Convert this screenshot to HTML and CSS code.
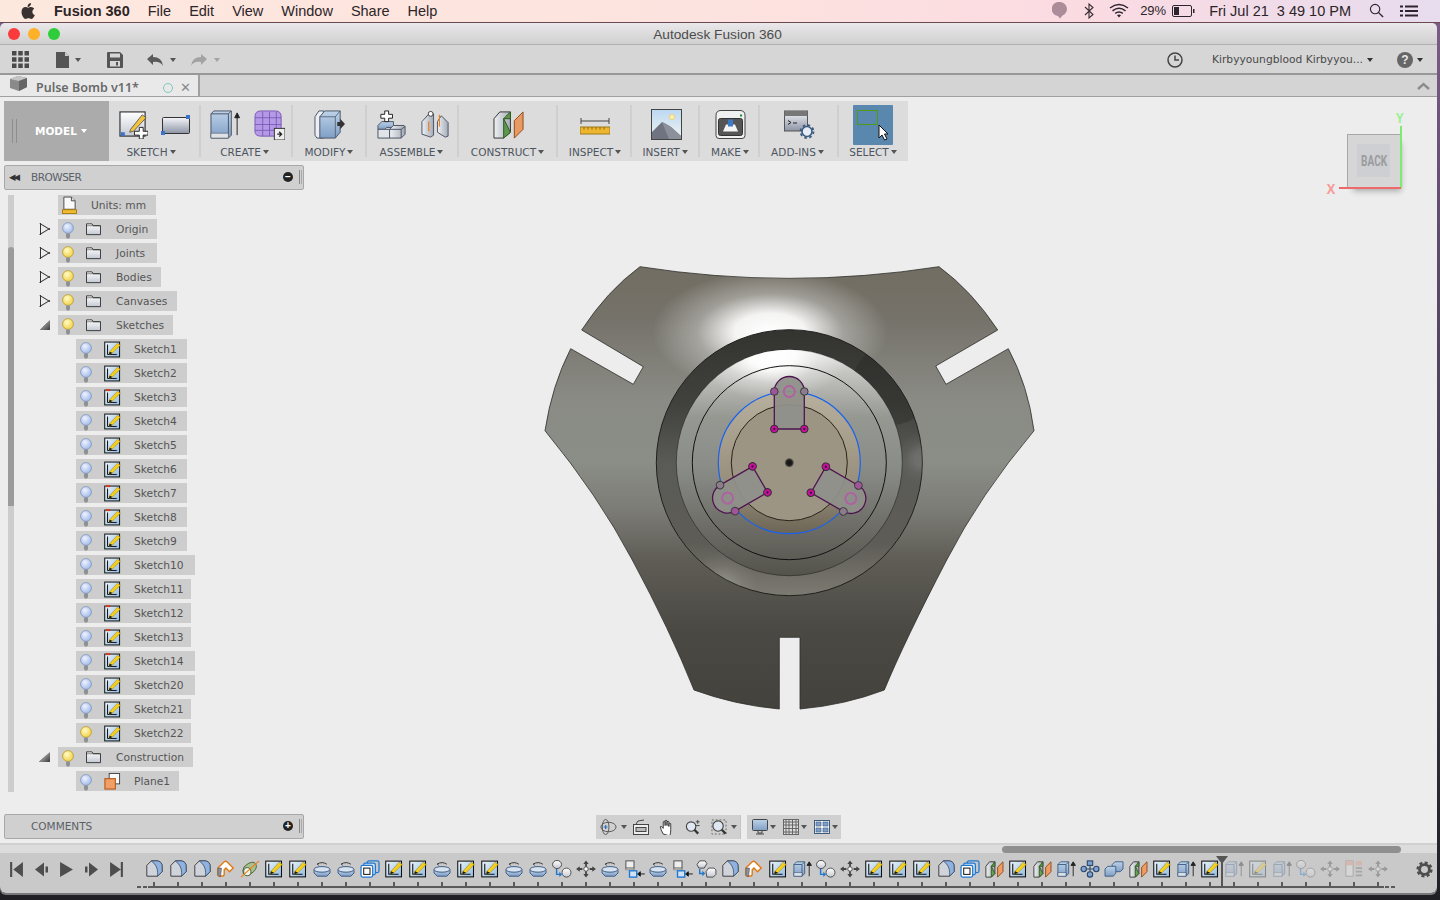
FILE: index.html
```html
<!DOCTYPE html>
<html lang="en">
<head>
<meta charset="utf-8">
<title>Autodesk Fusion 360</title>
<link rel="stylesheet" href="styles.css">
</head>
<body>
<svg class="defs" aria-hidden="true">
  <defs>
    <linearGradient id="gWhite" x1="0" y1="0" x2="0" y2="1"><stop offset="0" stop-color="#fff"/><stop offset="1" stop-color="#c4c9d2"/></linearGradient>
    <linearGradient id="gBlue" x1="0" y1="0" x2="0" y2="1"><stop offset="0" stop-color="#bdd2e8"/><stop offset="1" stop-color="#7f9fc6"/></linearGradient>
    <linearGradient id="gSk" x1="0" y1="0" x2="1" y2="1"><stop offset="0" stop-color="#eef5fb"/><stop offset="1" stop-color="#8fbbe0"/></linearGradient>
    <linearGradient id="gRect" x1="0" y1="0" x2="0" y2="1"><stop offset="0" stop-color="#f4f5f8"/><stop offset="1" stop-color="#8d94a5"/></linearGradient>
    <linearGradient id="gGrey" x1="0" y1="0" x2="1" y2="0"><stop offset="0" stop-color="#eef0f3"/><stop offset="1" stop-color="#a5abb6"/></linearGradient>
    <radialGradient id="gBulbB" cx=".4" cy=".35" r=".7"><stop offset="0" stop-color="#eef3ff"/><stop offset="1" stop-color="#9db8ea"/></radialGradient>
    <radialGradient id="gBulbY" cx=".4" cy=".35" r=".7"><stop offset="0" stop-color="#fffbc8"/><stop offset="1" stop-color="#f2cf3c"/></radialGradient>
    <linearGradient id="gSky" x1="0" y1="0" x2="0" y2="1"><stop offset="0" stop-color="#bcd8f2"/><stop offset="1" stop-color="#f2f4f0"/></linearGradient>

    <symbol id="bulb-b" viewBox="0 0 14 18"><circle cx="7" cy="6" r="5.4" fill="url(#gBulbB)" stroke="#7f93b8" stroke-width=".8"/><path d="M5 11.5h4v3.5l-1 1.5H6l-1-1.5z" fill="#8e9094"/></symbol>
    <symbol id="bulb-y" viewBox="0 0 14 18"><circle cx="7" cy="6" r="5.4" fill="url(#gBulbY)" stroke="#b79a30" stroke-width=".8"/><path d="M5 11.5h4v3.5l-1 1.5H6l-1-1.5z" fill="#8e9094"/></symbol>
    <symbol id="folder" viewBox="0 0 16 14"><path d="M.5 13V1.5h6l1 2h8V13z" fill="url(#gWhite)" stroke="#333"/><path d="M.5 3.5h15" stroke="#333" stroke-width=".6"/></symbol>
    <symbol id="units" viewBox="0 0 16 20"><path d="M2 14V1h8l4 4v9z" fill="#fafafa" stroke="#444"/><path d="M10 1v4h4" fill="#ddd" stroke="#444"/><rect x=".5" y="14.5" width="15" height="4" fill="#f0bb2e" stroke="#a87a10"/></symbol>
    <symbol id="sk" viewBox="0 0 24 24"><rect x="1" y="1.500" width="21" height="21" fill="url(#gSk)" stroke="#111" stroke-width="1.400"/><path d="M5 5v14h13" fill="none" stroke="#111" stroke-width="1.400"/><path d="M8 15 19 3l4 3-11 11-5 2z" fill="#f5cf1e" stroke="#8a6d10" stroke-width=".6"/><path d="M8 15l-1 4 5-2" fill="#111"/></symbol>
    <symbol id="skr" viewBox="0 0 24 24"><rect x="1" y="1.500" width="21" height="21" fill="url(#gSk)" stroke="#111" stroke-width="1.400"/><path d="M5 5v14h13" fill="none" stroke="#111" stroke-width="1.400"/><path d="M8 15 19 3l4 3-11 11-5 2z" fill="#f5cf1e" stroke="#8a6d10" stroke-width=".6"/><path d="M8 15l-1 4 5-2" fill="#111"/><path d="M3 0h6v3H3z" fill="#c9402a"/></symbol>
    <symbol id="plane" viewBox="0 0 18 18"><rect x="5.500" y=".5" width="11" height="11" fill="#fafafa" stroke="#444"/><rect x="1" y="6" width="11" height="11" fill="#f0a066" stroke="#b85a18" stroke-width="1.200"/></symbol>

    <symbol id="t-chamfer" viewBox="0 0 24 20"><path d="M4 18V6l5-5h7q5 1 5 6v6l-5 5z" fill="#d0d4da" stroke="#333"/><path d="M9 1h7q5 1 5 6v6l-5 5v-4q0-8-7-13z" fill="#8fb2de" stroke="#2f4666" stroke-width=".8"/></symbol>
    <symbol id="t-fillet" viewBox="0 0 24 20"><path d="M6 18q-3 0-3-2V9l7-7q2-1 3 0l7 7-4 4-4-4-2 2v5q0 2-4 2z" fill="#fff" stroke="#e07a14" stroke-width="1.600"/><path d="M3 9v8q1 2 3 1l1-9z" fill="#8c929e" stroke="#444" stroke-width=".6"/></symbol>
    <symbol id="t-cyl" viewBox="0 0 24 20"><path d="M4 12q0-5 6-8 6-3 8 0 3 4-2 9-5 5-9 4-3-1-3-5z" fill="#a9c28d" stroke="#3e5c2f"/><ellipse cx="9" cy="13" rx="4" ry="4.500" fill="#eef2e8" stroke="#3e5c2f"/><path d="M2 19 22 1" stroke="#ef7d1a" stroke-width="1.200"/></symbol>
    <symbol id="t-rev" viewBox="-3 -1 30 22"><path d="M6 4q6-4 12 0" fill="none" stroke="#333" stroke-width="1.200"/><path d="M6 4l2-1M6 4l2 1.500" fill="none" stroke="#333"/><path d="M2 11v4l4 4h12l4-4v-4z" fill="url(#gBlue)" stroke="#3c5a80" stroke-width="1.200"/><ellipse cx="12" cy="10.500" rx="10" ry="3.500" fill="#d7e3f0" stroke="#3c5a80" stroke-width="1.200"/></symbol>
    <symbol id="t-offset" viewBox="0 0 24 20"><rect x="9" y="1" width="13" height="13" rx="2" fill="none" stroke="#1e78d2" stroke-width="1.400"/><rect x="5" y="3.500" width="13" height="13" rx="2" fill="#cfe0f2" stroke="#1e78d2" stroke-width="1.400"/><rect x="2" y="6" width="13" height="13" rx="2" fill="#fff" stroke="#1e78d2" stroke-width="1.400"/><rect x="5" y="9" width="7" height="7" fill="#fff" stroke="#222" stroke-width="1.200"/></symbol>
    <symbol id="t-combine" viewBox="0 0 24 20"><ellipse cx="6.500" cy="5" rx="5" ry="4.500" fill="url(#gWhite)" stroke="#444"/><circle cx="17" cy="14" r="5" fill="url(#gWhite)" stroke="#444"/><path d="M6 10v6h5" fill="none" stroke="#1e78d2" stroke-width="1.600"/><path d="M9 13l3 3-3 3" fill="#1e78d2"/></symbol>
    <symbol id="t-move" viewBox="0 0 24 20"><path d="M12 .5l3 4h-2v3h-2v-3H9zM12 19.500l3-4h-2v-3h-2v3H9zM1 10l4-3v2h3v2H5v2zM23 10l-4-3v2h-3v2h3v2z" fill="#444"/><circle cx="12" cy="10" r="2.500" fill="#fff" stroke="#444"/></symbol>
    <symbol id="t-split" viewBox="0 0 24 20"><rect x="3" y="1" width="9" height="8" fill="#eee" stroke="#444"/><rect x="3" y="9" width="9" height="2" fill="#ddd" stroke="#444" stroke-width=".5"/><rect x="7" y="12" width="8" height="7" fill="#cfe2f5" stroke="#1e78d2" stroke-width="1.500"/><path d="M24 15.500h-5M19 13l-3 2.500 3 2.500z" fill="#111" stroke="#111"/></symbol>
    <symbol id="t-combo" viewBox="0 0 24 20"><path d="M2 5l3-4h6l2 3-3 5H4z" fill="url(#gWhite)" stroke="#444"/><path d="M12 13l3-4h6l2 2v5l-3 3h-7z" fill="url(#gWhite)" stroke="#444"/><path d="M5 10v5h5" fill="none" stroke="#1e78d2" stroke-width="1.600"/><path d="M8 12l3 3-3 3" fill="#1e78d2"/></symbol>
    <symbol id="t-ext" viewBox="0 0 24 20"><path d="M3 5l3-3h9v13l-3 3H3z" fill="url(#gBlue)" stroke="#3c5a80"/><path d="M3 5h9l3-3M12 5v13" fill="none" stroke="#3c5a80"/><path d="M3 14h9v4H3z" fill="#dfe4ea" stroke="#3c5a80" stroke-width=".7"/><path d="M20 18V3M17.500 6 20 2l2.500 4z" fill="#222" stroke="#222"/></symbol>
    <symbol id="t-planes" viewBox="0 0 24 20"><path d="M3 7l4-5h6v13l-4 4H3z" fill="url(#gGrey)" stroke="#333"/><path d="M9 7h4V2L9 7v12l4-4z" fill="#6aa055" stroke="#2c5a1e"/><path d="M16 8l6-6v11l-6 6z" fill="#ef9b62" stroke="#8c4a18"/></symbol>
    <symbol id="t-pattern" viewBox="0 0 24 20"><rect x="9" y="1" width="6" height="5" fill="#7ea3d0" stroke="#2a466e" stroke-width="1.200"/><rect x="2" y="7" width="6" height="6" rx="3" fill="#7ea3d0" stroke="#2a466e" stroke-width="1.200"/><rect x="16" y="7" width="6" height="6" rx="3" fill="#7ea3d0" stroke="#2a466e" stroke-width="1.200"/><rect x="9" y="13" width="6" height="6" rx="3" fill="#7ea3d0" stroke="#2a466e" stroke-width="1.200"/><path d="M8 10h8M12 6v7" stroke="#2a466e" stroke-width="1.200"/></symbol>
    <symbol id="t-copy" viewBox="0 0 24 20"><path d="M10 5l3-3h9v8l-3 3H10z" fill="url(#gBlue)" stroke="#3c5a80"/><path d="M2 10l3-3h9v8l-3 3H2z" fill="url(#gBlue)" stroke="#3c5a80"/></symbol>
    <symbol id="t-table" viewBox="0 0 24 20"><rect x="3" y="1" width="8" height="17" fill="#eee" stroke="#666"/><rect x="3" y="1" width="8" height="5" fill="#e59a86"/><rect x="14" y="1" width="7" height="5" fill="#e59a86"/><path d="M14 9h7M14 13h7M14 17h7" stroke="#666" stroke-width="2"/></symbol>
  </defs>
</svg>

<header class="menubar">
  <div class="menu-left">
    <svg class="apple" viewBox="0 0 14 16"><path d="M10 0q.2 2-1.100 3.100Q7.800 4.200 6.500 4 6.500 2 7.600 1 8.800 0 10 0zM7 4.700c1 0 1.800-.7 3-.7 1.300 0 2.500.7 3.200 1.800-2.700 1.500-2.300 5.300.6 6.400-.7 1.800-2.200 3.800-3.500 3.800-1.100 0-1.500-.7-2.800-.7s-1.800.7-2.800.7C3 16 .5 12.500.5 9 .5 6 2.400 4.100 4.300 4.100c1.200 0 2 .6 2.700.6z" fill="#3a3230"/></svg>
    <strong class="app-name">Fusion 360</strong>
    <span>File</span><span>Edit</span><span>View</span><span>Window</span><span>Share</span><span>Help</span>
  </div>
  <div class="menu-right">
    <svg class="st-blob" viewBox="0 0 15 17"><path d="M7.500 0a7 7 0 0 1 3 13.500L8 16.500 6 14A7 7 0 0 1 7.500 0z" fill="#ab8c98"/></svg>
    <svg class="st-bt" viewBox="0 0 10 16"><path d="M1 4l8 7.500L5 15V1l4 3.500L1 12" fill="none" stroke="#3a2c34" stroke-width="1.100"/></svg>
    <svg class="st-wifi" viewBox="0 0 20 15"><path d="M1 5q9-7 18 0M3.500 7.800q6.500-5 13 0M6.200 10.400q3.800-3 7.600 0" fill="none" stroke="#2e2430" stroke-width="1.500"/><path d="M10 14.500l-2-2.300q2-1.300 4 0z" fill="#2e2430"/></svg>
    <span class="st-pct">29%</span>
    <svg class="st-bat" viewBox="0 0 23 12"><rect x=".5" y=".5" width="19" height="11" rx="1.500" fill="none" stroke="#2e2430"/><rect x="2" y="2" width="5" height="8" fill="#2e2430"/><rect x="21" y="4" width="1.500" height="4" fill="#2e2430"/></svg>
    <span class="st-date">Fri Jul 21&nbsp; 3 49 10 PM</span>
    <svg class="st-search" viewBox="0 0 16 16"><circle cx="6.500" cy="6.500" r="5" fill="none" stroke="#2e2430" stroke-width="1.200"/><path d="M10 10l5 5" stroke="#2e2430" stroke-width="1.500"/></svg>
    <svg class="st-list" viewBox="0 0 18 12"><path d="M5 1.500h13M5 6h13M5 10.500h13M0 1.500h3M0 6h3M0 10.500h3" stroke="#2e2430" stroke-width="1.800"/></svg>
  </div>
</header>

<div class="window">
  <div class="titlebar">
    <div class="lights"><i class="light red"></i><i class="light amber"></i><i class="light green"></i></div>
    <div class="title">Autodesk Fusion 360</div>
  </div>

  <div class="toolbar">
    <div class="tool-left">
      <svg class="ic-apps" viewBox="0 0 17 17"><path d="M0 0h4.500v4.500H0zM6.250 0h4.500v4.500h-4.500zM12.500 0H17v4.500h-4.500zM0 6.250h4.500v4.500H0zM6.250 6.250h4.500v4.500h-4.500zM12.500 6.250H17v4.500h-4.500zM0 12.500h4.500V17H0zM6.250 12.500h4.500V17h-4.500zM12.500 12.500H17V17h-4.500z" fill="#4a4a4a"/></svg>
      <span class="tool-pair tp-file"><svg class="ic-file" viewBox="0 0 14 16"><path d="M0 0h9l4 4v12H0z" fill="#555"/><path d="M9 0v4h4" fill="#ccc"/></svg><i class="caret"></i></span>
      <svg class="ic-save" viewBox="0 0 16 16"><path d="M0 1q0-1 1-1h12l3 3v12q0 1-1 1H1q-1 0-1-1z" fill="#555"/><rect x="3" y="1.500" width="10" height="4" fill="#d6d6d6"/><rect x="3" y="9" width="10" height="5.500" fill="#d6d6d6"/><rect x="9" y="10" width="2" height="3.500" fill="#555"/></svg>
      <span class="tool-pair tp-undo"><svg class="ic-arrow" viewBox="0 0 16 12"><path d="M0 5l6-5v3q9 0 10 9-3-5-10-4v3z" fill="#5a5a5a"/></svg><i class="caret"></i></span>
      <span class="tool-pair tp-redo"><svg class="ic-arrow" viewBox="0 0 16 12"><path d="M16 5l-6-5v3Q1 3 0 12q3-5 10-4v3z" fill="#a3a3a3"/></svg><i class="caret dim"></i></span>
    </div>
    <div class="tool-right">
      <svg class="ic-clock" viewBox="0 0 16 16"><circle cx="8" cy="8" r="7" fill="none" stroke="#444" stroke-width="1.500"/><path d="M8 3.500V8h4" fill="none" stroke="#444" stroke-width="1.500"/></svg>
      <span class="user">Kirbyyoungblood Kirbyyou...</span><i class="caret dark"></i>
      <span class="tool-pair tp-help"><span class="help">?</span><i class="caret dark"></i></span>
    </div>
  </div>

  <div class="tabbar">
    <div class="tab">
      <svg class="ic-tabcube" viewBox="0 0 17 15"><path d="M0 3l8-3 9 2v9l-8 4-9-3z" fill="#8a8a8a"/><path d="M0 3l9 2 8-3-9-2z" fill="#c4c4c4"/><path d="M9 5v10l8-4V2z" fill="#666"/></svg>
      <span class="tab-name">Pulse Bomb v11*</span>
      <i class="tab-dot"></i>
      <span class="tab-x">✕</span>
    </div>
    <svg class="ic-collapse" viewBox="0 0 13 8"><path d="M1 7l5.500-5L12 7" fill="none" stroke="#8c8c8c" stroke-width="2.400"/></svg>
  </div>

  <main class="viewport">
    <svg class="model" viewBox="530 250 520 470">
      <defs>
        <linearGradient id="mBody" gradientUnits="userSpaceOnUse" x1="0" y1="266" x2="0" y2="709"><stop offset="0" stop-color="#716d62"/><stop offset=".12" stop-color="#75726a"/><stop offset=".3" stop-color="#8a8b85"/><stop offset=".44" stop-color="#8b8d87"/><stop offset=".55" stop-color="#7c7c76"/><stop offset=".66" stop-color="#5f5d56"/><stop offset=".82" stop-color="#4b4943"/><stop offset="1" stop-color="#44423c"/></linearGradient>
        <radialGradient id="mGlow"><stop offset="0" stop-color="#fff"/><stop offset=".3" stop-color="#fff" stop-opacity=".92"/><stop offset=".62" stop-color="#fff" stop-opacity=".32"/><stop offset="1" stop-color="#fff" stop-opacity="0"/></radialGradient>
        <linearGradient id="mRing" gradientUnits="userSpaceOnUse" x1="0" y1="330" x2="0" y2="596"><stop offset="0" stop-color="#33332f"/><stop offset=".28" stop-color="#41413d"/><stop offset=".5" stop-color="#5a5b57"/><stop offset=".8" stop-color="#5e5c56"/><stop offset="1" stop-color="#7d7a72"/></linearGradient>
        <linearGradient id="mDisc" gradientUnits="userSpaceOnUse" x1="0" y1="350" x2="0" y2="576"><stop offset="0" stop-color="#e8e8e6"/><stop offset=".1" stop-color="#c4c4c1"/><stop offset=".3" stop-color="#959791"/><stop offset=".52" stop-color="#8a8c88"/><stop offset=".74" stop-color="#72726c"/><stop offset="1" stop-color="#54524b"/></linearGradient>
        <linearGradient id="mTan" gradientUnits="userSpaceOnUse" x1="0" y1="392" x2="0" y2="534"><stop offset="0" stop-color="#b8b09e"/><stop offset=".7" stop-color="#948b79"/><stop offset="1" stop-color="#6c6454"/></linearGradient>
        <radialGradient id="mDot"><stop offset="0" stop-color="#111"/><stop offset=".6" stop-color="#222"/><stop offset="1" stop-color="#222" stop-opacity="0"/></radialGradient>
        <clipPath id="mClip"><path d="M640 266.700Q789 290 939 266.700Q972 291 997.700 330L935.700 366L946 384.300L1008.300 348.700Q1028 385 1034 430.700Q980 495 946.700 560Q905 640 884.300 690Q845 705 800 709V637.300H779.300V709Q735 705 694 690Q670 630 632.300 560Q598 495 545 430.700Q552 385 570.700 348.700L633.300 384.300L643.300 366.700L581.700 330Q607 291 640 266.700z"/></clipPath>
        <clipPath id="mRingClip"><circle cx="789.300" cy="462.700" r="133"/></clipPath>
        <clipPath id="mDiscClip"><circle cx="789.300" cy="462.700" r="113"/></clipPath>
        <g id="arm">
          <path d="M774.500 391.500A15 15 0 0 1 804.500 391.500V429H774.500z" fill="#8f918a" fill-opacity=".94" stroke="#4e1450" stroke-width="1.300"/>
          <circle cx="789.500" cy="391.500" r="5.500" fill="none" stroke="#b05fa2" stroke-width="1.800"/>
          <circle cx="774.500" cy="391.500" r="3.800" fill="#a0549a" stroke="#3a3a3a"/>
          <circle cx="804.500" cy="391.500" r="3.800" fill="#8d7b8e" stroke="#3a3a3a"/>
          <circle cx="774.500" cy="429" r="3.800" fill="#c4109a" stroke="#2e2e2e"/><circle cx="774.500" cy="429" r="1.100" fill="#301030"/>
          <circle cx="804.500" cy="429" r="3.800" fill="#c4109a" stroke="#2e2e2e"/><circle cx="804.500" cy="429" r="1.100" fill="#301030"/>
        </g>
      </defs>
      <path d="M640 266.700Q789 290 939 266.700Q972 291 997.700 330L935.700 366L946 384.300L1008.300 348.700Q1028 385 1034 430.700Q980 495 946.700 560Q905 640 884.300 690Q845 705 800 709V637.300H779.300V709Q735 705 694 690Q670 630 632.300 560Q598 495 545 430.700Q552 385 570.700 348.700L633.300 384.300L643.300 366.700L581.700 330Q607 291 640 266.700z" fill="url(#mBody)" stroke="#2c2c2a" stroke-width=".8"/>
      <g clip-path="url(#mClip)"><ellipse cx="770" cy="332" rx="118" ry="62" fill="url(#mGlow)"/></g>
      <circle cx="789.300" cy="462.700" r="133" fill="url(#mRing)" stroke="#1f1f1d"/>
      <g clip-path="url(#mRingClip)">
        <circle cx="922" cy="458" r="26" fill="url(#mGlow)" opacity=".14"/>
        <circle cx="722" cy="588" r="36" fill="url(#mGlow)" opacity=".18"/>
        <circle cx="892" cy="385" r="40" fill="#222" opacity=".3"/>
      </g>
      <circle cx="789.300" cy="462.700" r="113" fill="url(#mDisc)" stroke="#222" stroke-width=".6"/>
      <g clip-path="url(#mDiscClip)"><ellipse cx="772" cy="356" rx="76" ry="44" fill="url(#mGlow)"/></g>
      <circle cx="789.300" cy="462.700" r="97" fill="none" stroke="#111" stroke-width="1"/>
      <circle cx="789.300" cy="462.700" r="71" fill="url(#mTan)" stroke="#1a62ee" stroke-width="1.200"/>
      <circle cx="789.300" cy="462.700" r="58" fill="#9c9584" stroke="#2a2218" stroke-width="1"/>
      <circle cx="789.300" cy="462.700" r="5" fill="url(#mDot)"/>
      <use href="#arm" transform="translate(-.2 0)"/>
      <use href="#arm" transform="rotate(120 789.300 462.700)"/>
      <use href="#arm" transform="rotate(240 789.300 462.700)"/>
    </svg>

    <div class="cube">
      <span class="ax-y">Y</span>
      <span class="ax-x">X</span>
      <i class="axis-y"></i>
      <i class="axis-x"></i>
      <div class="cube-face"><span class="cube-label">BACK</span></div>
    </div>

    <nav class="ribbon">
      <div class="rb-model"><i class="grip"></i><span>MODEL</span><i class="caret white"></i></div>
      <div class="rb-group g-sketch">
        <div class="rb-icons">
          <svg class="ri-28" viewBox="0 0 30 30"><rect x="1" y="2" width="26" height="25" fill="url(#gWhite)" stroke="#333" stroke-width="1.200"/><rect x="2" y="23" width="4" height="4" fill="#3e72c8"/><path d="M12 20 24 5l4 3-13 14-4 1z" fill="#f4c33c" stroke="#555" stroke-width=".9"/><path d="M16 22h5v-4h4v4h5v4h-5v4h-4v-4h-5z" fill="#fff" stroke="#222"/></svg>
          <svg class="ri-rect" viewBox="0 0 30 20"><rect x="1.500" y="2.500" width="27" height="16" rx="1" fill="url(#gRect)" stroke="#333"/><rect x="25" y="0" width="4" height="4" fill="#3e72c8"/><rect x="0" y="16" width="4" height="4" fill="#3e72c8"/></svg>
        </div>
        <span class="rb-label">SKETCH<i class="caret"></i></span>
      </div>
      <div class="rb-group g-create">
        <div class="rb-icons">
          <svg class="ri-32" viewBox="0 0 32 32"><path d="M1 5l3-3h18v25l-3 3H1z" fill="url(#gBlue)" stroke="#4a5566"/><path d="M19 5v25M1 5h18l3-3" fill="none" stroke="#4a5566"/><path d="M1 25h18v5H1z" fill="#dfe3e8" stroke="#4a5566" stroke-width=".6"/><path d="M28 27V6M25.500 9 28 4l2.500 5z" fill="#222" stroke="#222"/></svg>
          <svg class="ri-32" viewBox="0 0 32 32"><path d="M1 8q0-6 6-6h15q6 0 6 6v15q0 5-6 5H7q-6 0-6-5z" fill="#b49ae6" stroke="#7a58b5"/><path d="M1 9h27M1 16h27M1 22h24M9 3v25M16 3v25M23 3v22" stroke="#7a58b5" stroke-width=".9" fill="none"/><rect x="21" y="20" width="11" height="12" fill="#eee" stroke="#333"/><path d="M24 26h4M26 23.500l2.500 2.500-2.500 2.500" fill="none" stroke="#222" stroke-width="1.300"/></svg>
        </div>
        <span class="rb-label">CREATE<i class="caret"></i></span>
      </div>
      <div class="rb-group g-modify">
        <div class="rb-icons">
          <svg class="ri-32" viewBox="0 0 32 32"><path d="M1 8l4-6h5v28H3l-2-3z" fill="#eceef2" stroke="#4a5566"/><path d="M6 30V8l5-6h16v22l-5 6z" fill="url(#gBlue)" stroke="#4a5566"/><path d="M6 8h16l5-6M22 8v22" fill="none" stroke="#4a5566" stroke-width=".8"/><path d="M24 13.500h3V10l5 5.500-5 5.500v-3.500h-3z" fill="#333"/></svg>
        </div>
        <span class="rb-label">MODIFY<i class="caret"></i></span>
      </div>
      <div class="rb-group g-assemble">
        <div class="rb-icons">
          <svg class="ri-32" viewBox="0 0 32 30"><path d="M2 16l4-4h12v6h-7l-1 1v1H2z" fill="url(#gBlue)" stroke="#4a5566"/><path d="M2 20h12v9H2z" fill="#e0e3e8" stroke="#4a5566"/><path d="M14 20l4-4h11l1 1v8l-4 4H14z" fill="url(#gGrey)" stroke="#4a5566"/><path d="M14 20h12v9M26 20l4-3" fill="none" stroke="#4a5566"/><path d="M5 4.500h4V1h4v3.500h4v4h-4V12H9V8.500H5z" fill="#fff" stroke="#222"/></svg>
          <svg class="ri-32" viewBox="0 0 32 30"><path d="M2 12l9-10 3 2v22l-3 2-9-3z" fill="url(#gGrey)" stroke="#4a5566"/><path d="M18 12l4-6 7 7v14l-3 1-8-5z" fill="url(#gGrey)" stroke="#4a5566"/><circle cx="11" cy="4" r="2.500" fill="#fff" stroke="#444"/><path d="M9 12v10M20 5v12" stroke="#ec7a1a" stroke-width="1.200"/></svg>
        </div>
        <span class="rb-label">ASSEMBLE<i class="caret"></i></span>
      </div>
      <div class="rb-group g-construct">
        <div class="rb-icons">
          <svg class="ri-32" viewBox="0 0 32 30"><path d="M1 9l6-7h11v21l-7 6H1z" fill="url(#gGrey)" stroke="#333"/><path d="M11 9h7V2l-7 7v20l7-6z" fill="#5e9650" stroke="#2c5a1e"/><path d="M22 11l9-9v18l-9 9z" fill="#e99a64" stroke="#8c4a18"/></svg>
        </div>
        <span class="rb-label">CONSTRUCT<i class="caret"></i></span>
      </div>
      <div class="rb-group g-inspect">
        <div class="rb-icons">
          <svg class="ri-ruler" viewBox="0 0 30 18"><path d="M1 1v6M29 1v6M1 4h28" stroke="#444" fill="none"/><rect x="0" y="10" width="30" height="7" fill="#eeb52f" stroke="#a07a18"/><path d="M4 10v2.500M8 10v2.500M12 10v2.500M16 10v2.500M20 10v2.500M24 10v2.500" stroke="#8d6a12"/></svg>
        </div>
        <span class="rb-label">INSPECT<i class="caret"></i></span>
      </div>
      <div class="rb-group g-insert">
        <div class="rb-icons">
          <svg class="ri-32" viewBox="0 0 31 31"><rect x=".5" y=".5" width="30" height="30" fill="url(#gSky)" stroke="#444"/><circle cx="21" cy="8" r="2.500" fill="#fff3b0" stroke="#f0d070"/><path d="M1 30V23L11 13l4 2 5 3 10 9v3z" fill="#6f7480"/><path d="M11 13l4 2 5 3 10 9v3H18z" fill="#8b909a"/></svg>
        </div>
        <span class="rb-label">INSERT<i class="caret"></i></span>
      </div>
      <div class="rb-group g-make">
        <div class="rb-icons">
          <svg class="ri-32" viewBox="0 0 31 30"><path d="M1 6q0-5 5-5h19q5 0 5 5v20q0 3-3 3H4q-3 0-3-3z" fill="#f0f0f0" stroke="#444"/><rect x="3.500" y="9" width="24" height="17" rx="2" fill="#555" stroke="#333"/><path d="M8 22l3-7h9l3 7z" fill="#f4f4f4"/><rect x="13" y="10" width="5" height="7" fill="#3e78c8"/><rect x="25" y="5" width="2" height="2" fill="#178a35"/></svg>
        </div>
        <span class="rb-label">MAKE<i class="caret"></i></span>
      </div>
      <div class="rb-group g-addins">
        <div class="rb-icons">
          <svg class="ri-32" viewBox="0 0 31 30"><rect x=".5" y="1.500" width="23" height="20" fill="url(#gRect)" stroke="#555"/><rect x=".5" y="1.500" width="23" height="5" fill="#777"/><path d="M4 11l3 2-3 2M9 13.500h4" fill="none" stroke="#222"/><circle cx="23" cy="22" r="5" fill="#e6ecf6" stroke="#3c5a80" stroke-width="1.600"/><circle cx="23" cy="22" r="6.500" fill="none" stroke="#3c5a80" stroke-width="1.800" stroke-dasharray="2.500 2.600"/></svg>
        </div>
        <span class="rb-label">ADD-INS<i class="caret"></i></span>
      </div>
      <div class="rb-group g-select">
        <div class="rb-icons">
          <div class="sel-box"><i class="sel-rect"></i><svg class="sel-cursor" viewBox="0 0 11 17"><path d="M1 1v13l3-3 2.500 5 2.500-1-2.500-5H10z" fill="#fff" stroke="#111"/></svg></div>
        </div>
        <span class="rb-label">SELECT<i class="caret"></i></span>
      </div>
    </nav>

    <section class="panel-head browser">
      <span class="back-tri">◀◀</span>
      <span class="panel-title">BROWSER</span>
      <span class="panel-btn">−</span>
      <i class="panel-grip"></i>
    </section>

    <section class="tree">
      <div class="tree-scroll"><i class="thumb"></i></div>
      <ul class="rows">
        <li class="row"><span class="pill pill-units"><svg class="i-units"><use href="#units"/></svg><span>Units: mm</span></span></li>
        <li class="row"><i class="arr"></i><span class="pill w-99"><svg class="i-bulb"><use href="#bulb-b"/></svg><svg class="i-folder"><use href="#folder"/></svg><span>Origin</span></span></li>
        <li class="row"><i class="arr"></i><span class="pill w-99"><svg class="i-bulb"><use href="#bulb-y"/></svg><svg class="i-folder"><use href="#folder"/></svg><span>Joints</span></span></li>
        <li class="row"><i class="arr"></i><span class="pill w-103"><svg class="i-bulb"><use href="#bulb-y"/></svg><svg class="i-folder"><use href="#folder"/></svg><span>Bodies</span></span></li>
        <li class="row"><i class="arr"></i><span class="pill w-119"><svg class="i-bulb"><use href="#bulb-y"/></svg><svg class="i-folder"><use href="#folder"/></svg><span>Canvases</span></span></li>
        <li class="row"><i class="arr open"></i><span class="pill w-115"><svg class="i-bulb"><use href="#bulb-y"/></svg><svg class="i-folder"><use href="#folder"/></svg><span>Sketches</span></span></li>
        <li class="row sub"><span class="pill w-111"><svg class="i-bulb"><use href="#bulb-b"/></svg><svg class="i-sk"><use href="#sk"/></svg><span>Sketch1</span></span></li>
        <li class="row sub"><span class="pill w-111"><svg class="i-bulb"><use href="#bulb-b"/></svg><svg class="i-sk"><use href="#sk"/></svg><span>Sketch2</span></span></li>
        <li class="row sub"><span class="pill w-111"><svg class="i-bulb"><use href="#bulb-b"/></svg><svg class="i-sk"><use href="#skr"/></svg><span>Sketch3</span></span></li>
        <li class="row sub"><span class="pill w-111"><svg class="i-bulb"><use href="#bulb-b"/></svg><svg class="i-sk"><use href="#sk"/></svg><span>Sketch4</span></span></li>
        <li class="row sub"><span class="pill w-111"><svg class="i-bulb"><use href="#bulb-b"/></svg><svg class="i-sk"><use href="#sk"/></svg><span>Sketch5</span></span></li>
        <li class="row sub"><span class="pill w-111"><svg class="i-bulb"><use href="#bulb-b"/></svg><svg class="i-sk"><use href="#sk"/></svg><span>Sketch6</span></span></li>
        <li class="row sub"><span class="pill w-111"><svg class="i-bulb"><use href="#bulb-b"/></svg><svg class="i-sk"><use href="#skr"/></svg><span>Sketch7</span></span></li>
        <li class="row sub"><span class="pill w-111"><svg class="i-bulb"><use href="#bulb-b"/></svg><svg class="i-sk"><use href="#skr"/></svg><span>Sketch8</span></span></li>
        <li class="row sub"><span class="pill w-111"><svg class="i-bulb"><use href="#bulb-b"/></svg><svg class="i-sk"><use href="#sk"/></svg><span>Sketch9</span></span></li>
        <li class="row sub"><span class="pill w-119"><svg class="i-bulb"><use href="#bulb-b"/></svg><svg class="i-sk"><use href="#sk"/></svg><span>Sketch10</span></span></li>
        <li class="row sub"><span class="pill w-115"><svg class="i-bulb"><use href="#bulb-b"/></svg><svg class="i-sk"><use href="#sk"/></svg><span>Sketch11</span></span></li>
        <li class="row sub"><span class="pill w-115"><svg class="i-bulb"><use href="#bulb-b"/></svg><svg class="i-sk"><use href="#skr"/></svg><span>Sketch12</span></span></li>
        <li class="row sub"><span class="pill w-115"><svg class="i-bulb"><use href="#bulb-b"/></svg><svg class="i-sk"><use href="#skr"/></svg><span>Sketch13</span></span></li>
        <li class="row sub"><span class="pill w-119"><svg class="i-bulb"><use href="#bulb-b"/></svg><svg class="i-sk"><use href="#skr"/></svg><span>Sketch14</span></span></li>
        <li class="row sub"><span class="pill w-119"><svg class="i-bulb"><use href="#bulb-b"/></svg><svg class="i-sk"><use href="#sk"/></svg><span>Sketch20</span></span></li>
        <li class="row sub"><span class="pill w-115"><svg class="i-bulb"><use href="#bulb-b"/></svg><svg class="i-sk"><use href="#sk"/></svg><span>Sketch21</span></span></li>
        <li class="row sub"><span class="pill w-115"><svg class="i-bulb"><use href="#bulb-y"/></svg><svg class="i-sk"><use href="#sk"/></svg><span>Sketch22</span></span></li>
        <li class="row"><i class="arr open"></i><span class="pill w-135"><svg class="i-bulb"><use href="#bulb-y"/></svg><svg class="i-folder"><use href="#folder"/></svg><span>Construction</span></span></li>
        <li class="row sub"><span class="pill w-103"><svg class="i-bulb"><use href="#bulb-b"/></svg><svg class="i-sk"><use href="#plane"/></svg><span>Plane1</span></span></li>
      </ul>
    </section>

    <div class="bottom-row">
      <section class="panel-head comments">
        <span class="panel-title">COMMENTS</span>
        <span class="panel-btn">+</span>
        <i class="panel-grip"></i>
      </section>
      <div class="navbars">
        <div class="navbar nb-1">
          <svg class="nb-orbit" viewBox="0 0 19 18"><ellipse cx="10" cy="9" rx="8" ry="5" fill="none" stroke="#555"/><ellipse cx="7" cy="9" rx="3.500" ry="8" fill="none" stroke="#555"/><path d="M7 7v4M5 9h4" stroke="#2b74c8" stroke-width="1.300"/></svg><i class="caret"></i>
          <svg class="nb-ic nb-gap" viewBox="0 0 16 16"><rect x=".5" y="5.500" width="15" height="10" fill="#eee" stroke="#444"/><rect x="3" y="8.500" width="10" height="4" fill="#bbb" stroke="#444"/><path d="M3 5l2-3 6-1" fill="none" stroke="#444"/></svg>
          <svg class="nb-ic" viewBox="0 0 16 17"><path d="M4 16Q1 11 1 8q1-1 3 2V3q1-1.500 2 0v4-5q1-1.500 2 0v5-4q1-1.500 2 0v5-3q1-1 2 0v6q0 4-1 7z" fill="#fff" stroke="#333"/></svg>
          <svg class="nb-ic" viewBox="0 0 16 17"><circle cx="6" cy="8" r="5" fill="#dfe8f2" stroke="#444" stroke-width="1.200"/><path d="M9.500 11.500l4 4" stroke="#333" stroke-width="2.400"/><path d="M11 3h4M13 1v4M11 7h4" stroke="#444"/></svg>
          <svg class="nb-ic" viewBox="0 0 16 17"><path d="M.5 1h15v15H.5z" fill="none" stroke="#666" stroke-dasharray="2 2"/><circle cx="7" cy="7.500" r="5.500" fill="#dfe8f2" stroke="#444" stroke-width="1.200"/><path d="M11 11.500l4 4" stroke="#333" stroke-width="2.400"/></svg><i class="caret"></i>
        </div>
        <div class="navbar nb-2">
          <svg class="nb-ic" viewBox="0 0 16 16"><rect x=".5" y=".5" width="15" height="11" rx="1" fill="url(#gBlue)" stroke="#444"/><path d="M6 12v2h4v-2M4 15h8" fill="none" stroke="#444"/></svg><i class="caret"></i>
          <svg class="nb-ic nb-gap2" viewBox="0 0 16 16"><rect x=".5" y=".5" width="15" height="15" fill="#ddd" stroke="#666"/><path d="M3 0v16M6 0v16M9.500 0v16M13 0v16M0 3h16M0 6h16M0 9.500h16M0 13h16" stroke="#666"/></svg><i class="caret"></i>
          <svg class="nb-ic nb-gap2" viewBox="0 0 16 14"><rect x=".5" y=".5" width="15" height="13" fill="#f4f4f4" stroke="#3c5a80"/><path d="M2 2h5v4H2zM9 2h5v4H9zM2 8h5v4H2zM9 8h5v4H9z" fill="#7d9cc8" stroke="#3c5a80" stroke-width=".6"/></svg><i class="caret"></i>
        </div>
      </div>
    </div>
  </main>

  <div class="scroll-row"><i class="hthumb"></i></div>

  <footer class="timeline">
    <div class="controls">
      <svg class="tc" viewBox="0 0 12 14"><path d="M0 0h2v14H0zM12 0v14L3 7z" fill="#4e4e4e"/></svg>
      <svg class="tc" viewBox="0 0 13 14"><path d="M9 0v14L0 7z" fill="#4e4e4e"/><rect x="10.500" y="4" width="2.500" height="6" fill="#4e4e4e"/></svg>
      <svg class="tc" viewBox="0 0 12 14"><path d="M0 0l12 7-12 7z" fill="#4e4e4e"/></svg>
      <svg class="tc" viewBox="0 0 13 14"><path d="M4 0v14l9-7z" fill="#4e4e4e"/><rect y="4" width="2.500" height="6" fill="#4e4e4e"/></svg>
      <svg class="tc" viewBox="0 0 12 14"><path d="M0 0v14l10-7zM10 0h2v14h-2z" fill="#4e4e4e"/></svg>
    </div>
    <div class="track">
      <i class="marker"></i>
      <span class="ti"><svg><use href="#t-chamfer"/></svg></span>
      <span class="ti"><svg><use href="#t-chamfer"/></svg></span>
      <span class="ti"><svg><use href="#t-chamfer"/></svg></span>
      <span class="ti"><svg><use href="#t-fillet"/></svg></span>
      <span class="ti"><svg><use href="#t-cyl"/></svg></span>
      <span class="ti"><svg><use href="#sk"/></svg></span>
      <span class="ti"><svg><use href="#sk"/></svg></span>
      <span class="ti"><svg><use href="#t-rev"/></svg></span>
      <span class="ti"><svg><use href="#t-rev"/></svg></span>
      <span class="ti"><svg><use href="#t-offset"/></svg></span>
      <span class="ti"><svg><use href="#sk"/></svg></span>
      <span class="ti"><svg><use href="#sk"/></svg></span>
      <span class="ti"><svg><use href="#t-rev"/></svg></span>
      <span class="ti"><svg><use href="#sk"/></svg></span>
      <span class="ti"><svg><use href="#sk"/></svg></span>
      <span class="ti"><svg><use href="#t-rev"/></svg></span>
      <span class="ti"><svg><use href="#t-rev"/></svg></span>
      <span class="ti"><svg><use href="#t-combine"/></svg></span>
      <span class="ti"><svg><use href="#t-move"/></svg></span>
      <span class="ti"><svg><use href="#t-rev"/></svg></span>
      <span class="ti"><svg><use href="#t-split"/></svg></span>
      <span class="ti"><svg><use href="#t-rev"/></svg></span>
      <span class="ti"><svg><use href="#t-split"/></svg></span>
      <span class="ti"><svg><use href="#t-combo"/></svg></span>
      <span class="ti"><svg><use href="#t-chamfer"/></svg></span>
      <span class="ti"><svg><use href="#t-fillet"/></svg></span>
      <span class="ti"><svg><use href="#sk"/></svg></span>
      <span class="ti"><svg><use href="#t-ext"/></svg></span>
      <span class="ti"><svg><use href="#t-combine"/></svg></span>
      <span class="ti"><svg><use href="#t-move"/></svg></span>
      <span class="ti"><svg><use href="#sk"/></svg></span>
      <span class="ti"><svg><use href="#sk"/></svg></span>
      <span class="ti"><svg><use href="#sk"/></svg></span>
      <span class="ti"><svg><use href="#t-chamfer"/></svg></span>
      <span class="ti"><svg><use href="#t-offset"/></svg></span>
      <span class="ti"><svg><use href="#t-planes"/></svg></span>
      <span class="ti"><svg><use href="#sk"/></svg></span>
      <span class="ti"><svg><use href="#t-planes"/></svg></span>
      <span class="ti"><svg><use href="#t-ext"/></svg></span>
      <span class="ti"><svg><use href="#t-pattern"/></svg></span>
      <span class="ti"><svg><use href="#t-copy"/></svg></span>
      <span class="ti"><svg><use href="#t-planes"/></svg></span>
      <span class="ti"><svg><use href="#sk"/></svg></span>
      <span class="ti"><svg><use href="#t-ext"/></svg></span>
      <span class="ti"><svg><use href="#sk"/></svg></span>
      <span class="ti ghost"><svg><use href="#t-ext"/></svg></span>
      <span class="ti ghost"><svg><use href="#sk"/></svg></span>
      <span class="ti ghost"><svg><use href="#t-ext"/></svg></span>
      <span class="ti ghost"><svg><use href="#t-combine"/></svg></span>
      <span class="ti ghost"><svg><use href="#t-move"/></svg></span>
      <span class="ti ghost"><svg><use href="#t-table"/></svg></span>
      <span class="ti ghost"><svg><use href="#t-move"/></svg></span>
    </div>
    <svg class="gear" viewBox="0 0 18 18"><circle cx="9" cy="9" r="5.200" fill="none" stroke="#4e4e4e" stroke-width="3"/><circle cx="9" cy="9" r="7.300" fill="none" stroke="#4e4e4e" stroke-width="2.600" stroke-dasharray="3.200 2.530"/></svg>
  </footer>
</div>
</body>
</html>
```

FILE: styles.css
```css
* { box-sizing: border-box; }
html, body { margin: 0; padding: 0; height: 100%; }
body {
  width: 1440px; height: 900px; overflow: hidden;
  font-family: "DejaVu Sans", sans-serif;
  background: linear-gradient(180deg, #7d5c8a 0, #5b4a68 30%, #3b3845 70%, #1f1f25 100%);
}
.defs { display: block; width: 0; height: 0; }
i { display: block; font-style: normal; }

/* macOS menu bar */
.menubar {
  height: 23px; display: flex; justify-content: space-between; align-items: center;
  background: linear-gradient(90deg, #fde8de 0, #fde3df 50%, #fbdbe2 75%, #e7dcee 100%);
  border-bottom: 1px solid #6d4a52;
  font-family: "Liberation Sans", sans-serif; font-size: 14.5px; color: #2c2428;
  padding: 0 22px 1px 21px;
}
.menu-left { display: flex; align-items: center; gap: 18px; }
.apple { width: 14px; height: 16px; margin-right: 1px; }
.app-name { font-weight: 700; }
.menu-right { display: flex; align-items: center; }
.st-blob { width: 15px; height: 17px; margin-right: 17px; }
.st-bt { width: 10px; height: 16px; margin-right: 15px; }
.st-wifi { width: 20px; height: 15px; margin-right: 11px; }
.st-pct { font-size: 13px; margin-right: 6px; }
.st-bat { width: 23px; height: 12px; margin-right: 14px; }
.st-date { margin-right: 18px; white-space: nowrap; }
.st-search { width: 15px; height: 15px; margin-right: 16px; }
.st-list { width: 18px; height: 12px; }

/* window */
.window {
  width: 1437px; height: 870px; display: flex; flex-direction: column;
  border-radius: 5px 5px 6px 6px; overflow: hidden;
  box-shadow: 0 2px 0 #77777c;
}
.titlebar {
  height: 22px; flex: none; position: relative; display: flex; align-items: center; justify-content: center;
  background: linear-gradient(180deg, #eae8ea, #d0d0d0);
  border-bottom: 1px solid #b0b0b0;
}
.lights { position: absolute; left: 8px; top: 5px; display: flex; gap: 8px; }
.light { width: 12px; height: 12px; border-radius: 50%; }
.red { background: #fb3b3b; }
.amber { background: #fdb028; }
.green { background: #2fcd3a; }
.title { font-family: "Liberation Sans", sans-serif; font-size: 13.700px; color: #4c4c4c; padding-top: 2px; padding-right: 2px; }

.toolbar {
  height: 30px; flex: none; display: flex; justify-content: space-between; align-items: center;
  background: #d6d6d6; border-bottom: 2px solid #989898;
  padding: 1px 14px 0 12px;
}
.tool-left, .tool-right { display: flex; align-items: center; }
.ic-apps { width: 17px; height: 17px; margin-right: 27px; }
.tool-pair { display: flex; align-items: center; gap: 5px; }
.ic-file { width: 14px; height: 16px; }
.tp-file { margin-right: 26px; }
.ic-save { width: 16px; height: 16px; margin-right: 24px; }
.ic-arrow { width: 16px; height: 12px; }
.tp-undo { gap: 7px; margin-right: 15px; }
.tp-redo { gap: 7px; }
.caret {
  width: 0; height: 0; flex: none;
  border-left: 3.500px solid transparent; border-right: 3.500px solid transparent;
  border-top: 4px solid #555;
}
.caret.dim { border-top-color: #a3a3a3; }
.caret.dark { border-top-color: #333; }
.caret.white { border-top-color: #fff; }
.ic-clock { width: 16px; height: 16px; margin-right: 29px; }
.user { font-size: 10.700px; color: #4a4a4a; margin-right: 4px; white-space: nowrap; }
.tp-help { margin-left: 24px; gap: 4px; }
.help {
  width: 16px; height: 16px; border-radius: 50%; background: #666; color: #e8e8e8;
  font: 700 12px/16px "Liberation Sans", sans-serif; text-align: center;
}

.tabbar {
  height: 22px; flex: none; display: flex; justify-content: space-between; align-items: center;
  background: #d4d4d4; border-bottom: 1px solid #a0a0a0;
  padding-right: 7px;
}
.tab {
  width: 200px; height: 21px; display: flex; align-items: center; align-self: flex-start;
  background: #e9e9e9; border-right: 2px solid #a0a0a0;
  padding: 4px 0 0 10px;
}
.ic-tabcube { width: 17px; height: 15px; margin-right: 9px; margin-top: -8px; }
.tab-name { font-family: "Noto Sans", sans-serif; font-weight: 600; font-size: 12.500px; color: #6a6a6a; white-space: nowrap; width: 128px; }
.tab-dot { width: 10px; height: 10px; border-radius: 50%; border: 1.300px solid #7dcab8; flex: none; margin-right: 7px; margin-left: -1px; }
.tab-x { font-size: 13px; font-weight: 700; color: #8a8a8a; line-height: 1; }
.ic-collapse { width: 13px; height: 8px; }

/* viewport */
.viewport {
  height: 746px; flex: none; position: relative; display: flex; flex-direction: column;
  background: #ededed; padding: 4px;
}
.model { position: absolute; left: 530px; top: 153px; width: 520px; height: 470px; }
.cube { position: absolute; left: 1325px; top: 16px; width: 90px; height: 90px; }
.cube-face {
  position: absolute; left: 22px; top: 21px; width: 54px; height: 54px;
  background: #d6d6d6; border: 1px solid #a8a8a8;
  box-shadow: 3px 6px 6px -3px rgba(0,0,0,.3);
  display: flex; align-items: center; justify-content: center;
}
.cube-face::before { content: ""; position: absolute; left: 9px; top: 9px; width: 33px; height: 33px; background: #cdcfd2; }
.cube-label { position: relative; font: 700 14px/1 "Roboto", sans-serif; color: #9a9ca0; transform: scaleX(.72); }
.axis-y { position: absolute; left: 75px; top: 13px; width: 2px; height: 62px; background: #7bec6e; z-index: 1; }
.axis-x { position: absolute; left: 14px; top: 74px; width: 62px; height: 2px; background: #ee6a6a; z-index: 1; }
.ax-y { position: absolute; left: 70px; top: -3px; font: 700 15px/1 "Open Sans", sans-serif; color: #9af094; transform: scaleX(.8); }
.ax-x { position: absolute; left: 1px; top: 68px; font: 700 15px/1 "Open Sans", sans-serif; color: #f79a9a; transform: scaleX(.85); }

.ribbon {
  position: relative; flex: none; align-self: flex-start; height: 60px; width: 904px; display: flex;
  background: #dcdcdc;
}
.rb-model {
  width: 105px; display: flex; align-items: center; background: #ababab; color: #fff;
  font-weight: 700; font-size: 10.500px; padding-left: 8px; flex: none;
}
.rb-model span { margin-left: 18px; margin-right: 4px; }
.grip { width: 5px; height: 24px; border-left: 1px solid #8e8e8e; border-right: 1px solid #8e8e8e; }
.rb-group {
  flex: none; display: flex; flex-direction: column; align-items: center;
  position: relative;
}
.rb-group::before { content: ""; position: absolute; right: 0; top: 4px; bottom: 4px; width: 2px; background: #cfcfcf; }
.g-select::before { display: none; }
.g-sketch { width: 92px; } .g-create { width: 92px; } .g-modify { width: 74px; } .g-assemble { width: 92px; }
.g-construct { width: 99px; } .g-inspect { width: 74px; } .g-insert { width: 68px; } .g-make { width: 60px; }
.g-addins { width: 79px; } .g-select { width: 70px; }
.rb-icons { height: 44px; padding-top: 2px; display: flex; align-items: center; justify-content: center; gap: 13px; }
.g-modify .rb-icons { padding-right: 2px; }
.ri-28 { width: 29px; height: 29px; }
.ri-rect { width: 30px; height: 20px; margin-top: 1px; }
.ri-32 { width: 31px; height: 31px; }
.ri-ruler { width: 30px; height: 18px; margin-top: 4px; }
.rb-label { display: flex; align-items: center; gap: 2px; font-size: 10.500px; color: #4d5560; line-height: 14px; white-space: nowrap; }
.g-sketch .rb-label { margin-right: 8px; }
.g-create .rb-label { margin-right: 5px; }
.g-modify .rb-label { margin-right: 2px; }
.g-assemble .rb-label { margin-right: 3px; }
.g-construct .rb-label { margin-right: 2px; }
.g-insert .rb-label { margin-right: 2px; }
.g-addins .rb-label { margin-right: 4px; }
.g-select .rb-label { margin-right: 2px; }
.sel-box { position: relative; width: 40px; height: 40px; background: #5a87ae; margin: 2px 2px 0 0; border-radius: 1px; }
.sel-rect { position: absolute; left: 4px; top: 5px; width: 21px; height: 15px; border: 1.500px solid #4f9a16; }
.sel-cursor { position: absolute; left: 25px; top: 19px; width: 11px; height: 17px; }

.panel-head {
  position: relative; height: 25px; width: 300px; flex: none; display: flex; align-items: center;
  background: #d0d0d0; border: 1px solid #a8a8a8; border-radius: 2px;
  font-size: 10.500px; color: #5a6068;
  padding-bottom: 1px;
}
.browser { margin-top: 4px; padding-left: 4px; }
.browser .panel-title { letter-spacing: -.5px; }
.back-tri { font-size: 8.500px; color: #333; width: 22px; letter-spacing: -2px; }
.panel-title { flex: 1; }
.comments { padding-left: 26px; }
.panel-btn {
  width: 10px; height: 10px; border-radius: 50%; background: #222; color: #fff;
  font: 700 10px/10px "Liberation Sans", sans-serif; text-align: center; margin-right: 6px;
}
.panel-grip { width: 3px; height: 14px; border-left: 1px solid #8a8a8a; border-right: 1px solid #aaa; margin-right: 1px; }

.tree { flex: 1; min-height: 0; display: flex; padding-top: 3px; }
.tree-scroll { width: 6px; height: 597px; margin-left: 4px; margin-top: 2px; background: #cdcdcd; position: relative; flex: none; }
.thumb { position: absolute; left: 0; top: 52px; width: 6px; height: 259px; background: #9b9b9b; border-radius: 3px 3px 0 0; }
.rows { list-style: none; margin: 0; padding: 0 0 0 44px; }
.row { height: 24px; display: flex; align-items: center; position: relative; font-size: 10.700px; color: #555; }
.row.sub { padding-left: 18px; }
.pill { height: 20px; display: flex; align-items: center; background: #cdcdcd; padding-left: 3px; white-space: nowrap; }
.w-99 { width: 99px; } .w-103 { width: 103px; } .w-111 { width: 111px; } .w-115 { width: 115px; }
.w-119 { width: 119px; } .w-135 { width: 135px; }
.pill-units { width: 98px; padding-left: 4px; }
.arr {
  position: absolute; left: -18px; top: 6px; width: 10px; height: 12px;
  border-left: 1.500px solid #333;
}
.arr::before, .arr::after { content: ""; position: absolute; left: -1px; width: 11.700px; height: 1.300px; background: #333; }
.arr::before { transform-origin: 0 0; top: 0; transform: rotate(31deg); }
.arr::after { transform-origin: 0 100%; top: 10.500px; transform: rotate(-31deg); }
.arr.open {
  top: 7px; left: -20px; width: 12px; height: 10px; border: 0;
  background: linear-gradient(135deg, transparent 50%, #8d8d8d 50%, #3a3a3a);
  clip-path: polygon(100% 0, 100% 100%, 0 100%);
}
.arr.open::before, .arr.open::after { display: none; }
.i-bulb { width: 14px; height: 18px; margin: 3px 11px 0 0; flex: none; }
.i-folder { width: 15px; height: 14px; margin-right: 15px; flex: none; }
.i-sk { width: 17px; height: 17px; margin-right: 13px; flex: none; }
.i-units { width: 15px; height: 19px; margin-right: 14px; flex: none; }

.bottom-row { display: flex; gap: 292px; flex: none; align-items: flex-end; }
.navbars { display: flex; gap: 6px; }
.navbar { height: 24px; display: flex; align-items: center; background: #d0d0d0; padding: 0 3px; flex: none; }
.nb-1 { width: 145px; border-right: 1px solid #c4c4c4; padding-left: 3px; }
.nb-2 { width: 94px; padding-left: 5px; }
.nb-orbit { width: 18px; height: 18px; }
.nb-1 .caret { margin-left: 4px; }
.nb-ic { width: 16px; height: 16px; margin-left: 10px; }
.nb-gap { margin-left: 6px; }
.nb-2 > .nb-ic:first-child { margin-left: 0; }
.nb-2 .caret { margin-left: 2px; }
.nb-gap2 { margin-left: 7px; }

.scroll-row { height: 10px; flex: none; background: #dcdcdc; border-top: 2px solid #d0d0d0; display: flex; align-items: center; }
.hthumb { width: 399px; height: 7px; margin-left: 1002px; border-radius: 4px; background: #8f8f8f; }

.timeline {
  height: 40px; flex: none; display: flex; align-items: flex-start;
  background: #c9c9c9; position: relative;
}
.controls { width: 142px; flex: none; display: flex; align-items: center; gap: 12px; padding: 9px 0 0 10px; }
.tc { width: 13px; height: 15px; }
.track {
  position: relative; margin-top: 3px; display: flex; width: 1248px; height: 32px; flex: none;
  background: linear-gradient(#5a5a5a,#5a5a5a) 6px 100%/1236px 2px no-repeat;
}
.track::before, .track::after { content: ""; position: absolute; bottom: 0; width: 10px; height: 2px; background: repeating-linear-gradient(90deg, #5a5a5a 0 4px, transparent 4px 6px); }
.track::before { left: -5px; }
.track::after { right: -5px; }
.ti { width: 24px; height: 30px; position: relative; flex: none; padding-top: 4px; display: block; }
.ti svg { display: block; width: 24px; height: 18px; }
.ti::after { content: ""; position: absolute; left: 11px; bottom: 0; width: 2px; height: 4px; background: #5a5a5a; }
.ghost svg { opacity: .35; }
.marker {
  position: absolute; left: 1074px; top: 0; width: 12px; height: 8px; z-index: 2;
  border-left: 6px solid transparent; border-right: 6px solid transparent; border-top: 8px solid #555;
}
.marker::after { content: ""; position: absolute; left: -1px; top: -1px; width: 2px; height: 24px; background: #555; }
.gear { width: 17px; height: 17px; margin: 8px 0 0 26px; flex: none; }
```
